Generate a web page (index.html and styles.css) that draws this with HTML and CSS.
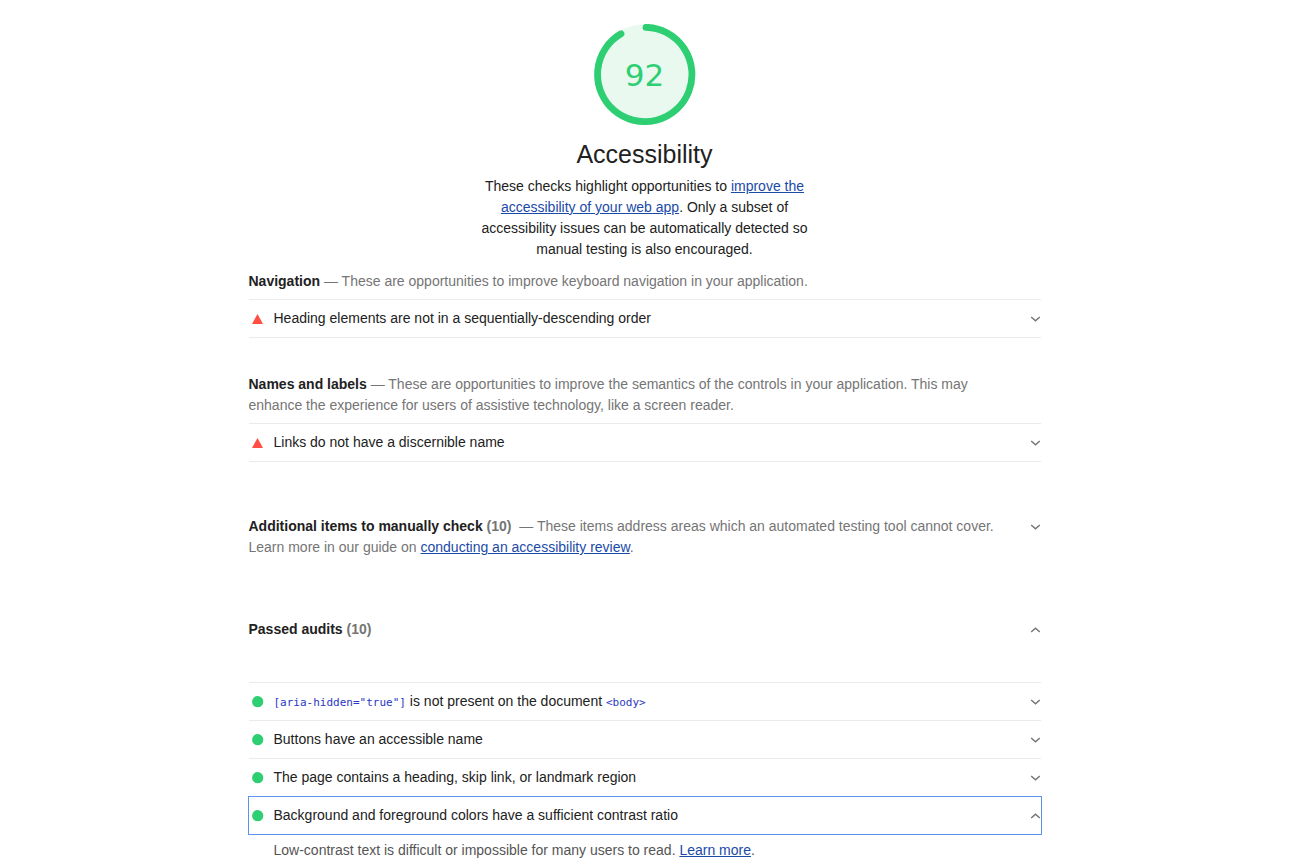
FILE: index.html
```
<!DOCTYPE html>
<html lang="en">
<head>
<meta charset="utf-8">
<title>Accessibility</title>
<link rel="stylesheet" href="styles.css">
</head>
<body>
<svg class="defs" width="0" height="0" aria-hidden="true">
  <symbol id="chevron" viewBox="0 0 10 6"><path d="M1.2 1 5.5 4.7 9.8 1" fill="none" stroke="#757575" stroke-width="1.5"/></symbol>
  <symbol id="fail" viewBox="0 0 12 12"><path d="M5.5 1 11 11H0z" fill="#ff4e42"/></symbol>
  <symbol id="pass" viewBox="0 0 12 12"><circle cx="5.7" cy="5.7" r="5.6" fill="#2ecf72"/></symbol>
</svg>
<main class="report">
  <header class="category">
    <div class="gauge">
      <svg class="gauge-ring" viewBox="0 0 102 102" aria-hidden="true">
        <circle cx="50.5" cy="50.5" r="50" fill="#e9f9f0"/>
        <path d="M52 3.3A47.2 47.2 0 1 1 27 9.7" fill="none" stroke="#2ecf72" stroke-width="6.8" stroke-linecap="round"/>
      </svg>
      <span class="gauge-score">92</span>
    </div>
    <h1 class="category-title">Accessibility</h1>
    <p class="category-text">These checks highlight opportunities to <a href="#">improve the accessibility of your web app</a>. Only a subset of accessibility issues can be automatically detected so manual testing is also encouraged.</p>
  </header>

  <section class="group">
    <h2 class="group-head"><b>Navigation</b> — These are opportunities to improve keyboard navigation in your application.</h2>
    <div class="audits">
      <details class="audit"><summary class="audit-row"><svg class="mark"><use href="#fail"/></svg><span class="audit-title">Heading elements are not in a sequentially-descending order</span><svg class="chevron"><use href="#chevron"/></svg></summary></details>
    </div>
  </section>

  <section class="group">
    <h2 class="group-head"><b>Names and labels</b> — These are opportunities to improve the semantics of the controls in your application. This may enhance the experience for users of assistive technology, like a screen reader.</h2>
    <div class="audits">
      <details class="audit"><summary class="audit-row"><svg class="mark"><use href="#fail"/></svg><span class="audit-title">Links do not have a discernible name</span><svg class="chevron"><use href="#chevron"/></svg></summary></details>
    </div>
  </section>

  <details class="clump">
    <summary class="clump-head"><span class="clump-text"><b>Additional items to manually check</b> <span class="count">(10)</span>&nbsp; — These items address areas which an automated testing tool cannot cover. Learn more in our guide on <a href="#">conducting an accessibility review</a>.</span><svg class="chevron"><use href="#chevron"/></svg></summary>
  </details>

  <details class="clump" open>
    <summary class="clump-head"><span class="clump-text"><b>Passed audits</b> <span class="count">(10)</span></span><svg class="chevron"><use href="#chevron"/></svg></summary>
    <div class="passed">
      <details class="audit"><summary class="audit-row"><svg class="mark"><use href="#pass"/></svg><span class="audit-title"><code>[aria-hidden="true"]</code> is not present on the document <code>&lt;body&gt;</code></span><svg class="chevron"><use href="#chevron"/></svg></summary></details>
      <details class="audit"><summary class="audit-row"><svg class="mark"><use href="#pass"/></svg><span class="audit-title">Buttons have an accessible name</span><svg class="chevron"><use href="#chevron"/></svg></summary></details>
      <details class="audit"><summary class="audit-row"><svg class="mark"><use href="#pass"/></svg><span class="audit-title">The page contains a heading, skip link, or landmark region</span><svg class="chevron"><use href="#chevron"/></svg></summary></details>
      <details class="audit" open><summary class="audit-row focused"><svg class="mark"><use href="#pass"/></svg><span class="audit-title">Background and foreground colors have a sufficient contrast ratio</span><svg class="chevron"><use href="#chevron"/></svg></summary>
        <p class="audit-text">Low-contrast text is difficult or impossible for many users to read. <a href="#">Learn more</a>.</p>
      </details>
    </div>
  </details>
</main>
</body>
</html>
```
FILE: styles.css
```
* { box-sizing: border-box; }
body {
  margin: 0;
  padding: 24px 12px 0 0;
  background: #fff;
  color: #212121;
  font: 14px/21px "Liberation Sans", Arial, sans-serif;
}
a { color: #1a4aa8; }
code { font: 11px/16px "DejaVu Sans Mono", monospace; color: #2a36c4; }
summary { list-style: none; cursor: pointer; }
summary::-webkit-details-marker { display: none; }
.defs { position: absolute; }
.report { max-width: 792px; margin: 0 auto; }

.category { display: flex; flex-direction: column; align-items: center; }
.gauge { display: grid; place-items: center; }
.gauge > * { grid-area: 1 / 1; }
.gauge-ring { width: 102px; height: 102px; }
.gauge-score { font: 31px/40px "DejaVu Sans", sans-serif; color: #2ecf72; }
.category-title { margin: 12px 0 6px; font-size: 25px; line-height: 32px; font-weight: 400; }
.category-text { max-width: 344px; margin: 0; text-align: center; }

.group { margin: 11px 0 36px; }
.group-head { margin: 0 0 7px; padding-right: 24px; font-size: 14px; line-height: 21px; font-weight: 400; color: #757575; }
.group-head b, .clump-text b { color: #212121; }
.audits { border-bottom: 1px solid #ebebeb; }
.audit { border-top: 1px solid #ebebeb; }
.audit-row { display: flex; align-items: center; gap: 10px; padding: 8px 0; }
.audit-title { flex: 1; }
.mark { width: 12px; height: 12px; margin-left: 3px; }
.chevron { width: 10px; height: 6px; flex: none; margin-right: 1px; }
details[open] > summary .chevron { transform: scaleY(-1); }
.focused { outline: 1px solid #5b93ea; }
.audit-text { margin: 6px 0 0 25px; color: #555; }

.clump { margin-top: 54px; }
.clump + .clump { margin-top: 61px; }
.clump-head { display: flex; gap: 12px; color: #757575; }
.clump-head .chevron { margin-top: 8px; }
.clump-text { flex: 1; }
.count { font-weight: 700; }
.passed { margin-top: 42px; }
```
